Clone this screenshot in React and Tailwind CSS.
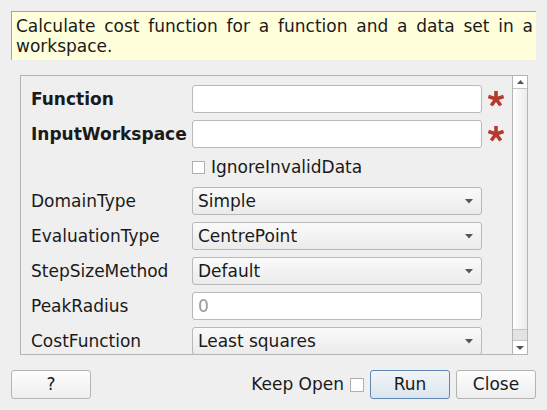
const FONT = { fontFamily: '"DejaVu Sans", "Liberation Sans", sans-serif' };

function Asterisk() {
  const arms = [0, 72, 144, 216, 288];
  return (
    <svg width="18" height="18" viewBox="-9 -9 18 18" className="shrink-0">
      {arms.map((a) => (
        <line
          key={a}
          x1="0"
          y1="0"
          x2="0"
          y2="-8"
          stroke="#b43a2c"
          strokeWidth="3.6"
          transform={`rotate(${a})`}
        />
      ))}
    </svg>
  );
}

function TextInput({ placeholder }) {
  return (
    <div className="h-[28px] w-[290px] rounded-[3px] border border-[#b9b9b9] bg-white flex items-center px-[5px] pt-[2px] text-[17px] text-[#9a9a9a]">
      {placeholder}
    </div>
  );
}

function Combo({ value }) {
  return (
    <div className="h-[28px] w-[290px] rounded-[3px] border border-[#b9b9b9] bg-gradient-to-b from-[#fafafa] to-[#ebebeb] flex items-center justify-between pl-[5px] pr-[8px] text-[17px] text-[#1a1a1a]">
      <span className="pt-[2px]">{value}</span>
      <svg width="8" height="5" viewBox="0 0 8 5">
        <path d="M0 0 L8 0 L4 4.5 Z" fill="#555" />
      </svg>
    </div>
  );
}

function Row({ label, bold, children, required }) {
  return (
    <div className="flex items-center h-[28px]">
      <div className={`w-[161px] pt-[2px] text-[17px] text-[#1a1a1a] whitespace-nowrap ${bold ? "font-bold" : ""}`}>{label}</div>
      {children}
      <div className="w-[23px] flex justify-end">{required && <Asterisk />}</div>
    </div>
  );
}

function Button({ children, primary }) {
  return (
    <div
      className={`h-[29px] w-[80px] rounded-[3px] border flex items-center justify-center pt-[1px] text-[17px] text-[#1a1a1a] ${
        primary
          ? "border-[#5f89b3] bg-gradient-to-b from-[#f1f5f9] to-[#dce5ee]"
          : "border-[#b4b4b4] bg-gradient-to-b from-[#fdfdfd] to-[#eeeeee]"
      }`}
    >
      {children}
    </div>
  );
}

export default function App() {
  return (
    <div className="w-[547px] h-[410px] bg-[#efefef] flex flex-col overflow-hidden" style={FONT}>
      {/* description */}
      <div className="mx-[11px] mt-[11px] h-[49px] border-t border-l border-[#a6a6a6] bg-[#ffffdc] pl-[4px] pr-[3px] pt-[4px] text-[17px] leading-[20px] text-[#1a1a1a] text-justify">
        Calculate cost function for a function and a data set in a workspace.
      </div>

      {/* property panel */}
      <div className="ml-[20px] mt-[15px] w-[508px] h-[280px] border border-[#b4b4b4] flex overflow-hidden">
        <div className="flex-1 pl-[10px] pt-[9px] flex flex-col gap-[7px]">
          <Row label="Function" bold required>
            <TextInput />
          </Row>
          <Row label="InputWorkspace" bold required>
            <TextInput />
          </Row>
          <div className="h-[25px] flex items-center pl-[161px] gap-[6px] text-[17px] text-[#1a1a1a]">
            <div className="w-[13px] h-[13px] border border-[#b0b0b0] bg-white" />
            <span className="pt-[1px]">IgnoreInvalidData</span>
          </div>
          <Row label="DomainType">
            <Combo value="Simple" />
          </Row>
          <Row label="EvaluationType">
            <Combo value="CentrePoint" />
          </Row>
          <Row label="StepSizeMethod">
            <Combo value="Default" />
          </Row>
          <Row label="PeakRadius">
            <TextInput placeholder="0" />
          </Row>
          <Row label="CostFunction">
            <Combo value="Least squares" />
          </Row>
        </div>

        {/* scrollbar */}
        <div className="w-[15px] border-l border-[#b4b4b4] flex flex-col">
          <div className="h-[13px] border-b border-[#c4c4c4] bg-white flex items-center justify-center">
            <svg width="7" height="4" viewBox="0 0 7 4">
              <path d="M0 4 L7 4 L3.5 0 Z" fill="#555" />
            </svg>
          </div>
          <div className="flex-1 bg-gradient-to-r from-white to-[#ececec] border-b border-[#c4c4c4]" />
          <div className="h-[11px] bg-[#e3e3e3] border-b border-[#c4c4c4]" />
          <div className="h-[13px] bg-white flex items-center justify-center">
            <svg width="8" height="4" viewBox="0 0 8 4">
              <path d="M0 0 L8 0 L4 4 Z" fill="#555" />
            </svg>
          </div>
        </div>
      </div>

      {/* buttons */}
      <div className="mt-[15px] mx-[11px] flex items-center">
        <Button>?</Button>
        <div className="flex-1" />
        <span className="pt-[1px] text-[17px] text-[#1a1a1a]">Keep Open</span>
        <div className="ml-[6px] w-[14px] h-[14px] border border-[#b0b0b0] bg-white" />
        <div className="ml-[6px]">
          <Button primary>Run</Button>
        </div>
        <div className="ml-[6px]">
          <Button>Close</Button>
        </div>
      </div>
    </div>
  );
}
